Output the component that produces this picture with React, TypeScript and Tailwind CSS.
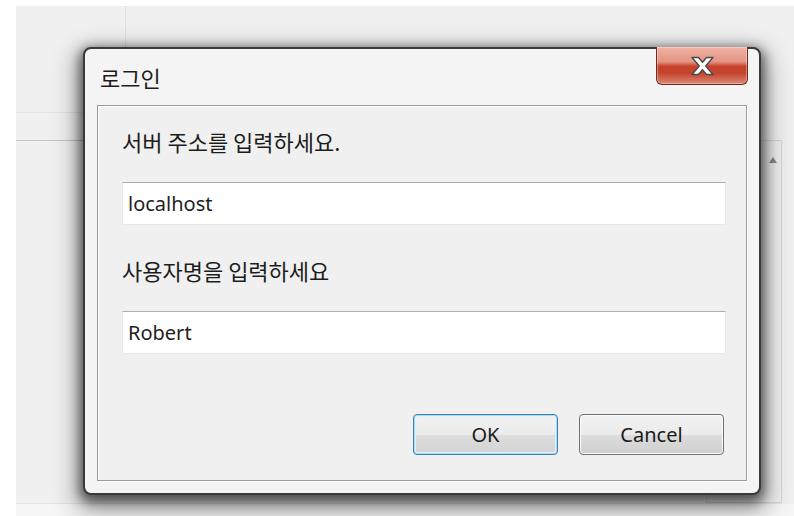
const korean = { fontFamily: '"Noto Sans CJK KR", "Noto Sans", sans-serif' };
const latin = { fontFamily: '"Noto Sans", "Noto Sans CJK KR", sans-serif' };

/** 빨간 닫기 버튼의 X 글리프 */
function CloseGlyph() {
  return (
    <svg width="25" height="20" viewBox="0 0 25 20">
      <path
        d="M2 1.5h6.5l4 4.8 4-4.8H23l-7.3 8.5L23 18.5h-6.5l-4-4.8-4 4.8H2l7.3-8.5z"
        fill="#ffffff"
        stroke="#4a4a4a"
        strokeWidth="1.4"
        strokeLinejoin="round"
      />
    </svg>
  );
}

function Field({ value }: { value: string }) {
  return (
    <div
      className="flex h-[43px] items-center border border-[#e3e9ef] border-t-[#abadb3] bg-white px-[5px] text-[20px] text-[#1e1e1e]"
      style={latin}
    >
      {value}
    </div>
  );
}

function DialogButton({ label, primary }: { label: string; primary?: boolean }) {
  return (
    <button
      className={
        primary
          ? 'flex h-[41px] w-[145px] items-center justify-center rounded-[4px] border border-[#3c7fb1] bg-[linear-gradient(#f2f2f2_0%,#ebebeb_50%,#dddddd_51%,#d3d3d3_100%)] text-[20px] text-[#1a1a1a] shadow-[inset_0_0_0_1px_#a8dcf6,inset_0_0_0_2px_#e2f3fc]'
          : 'flex h-[41px] w-[145px] items-center justify-center rounded-[4px] border border-[#707070] bg-[linear-gradient(#f2f2f2_0%,#ebebeb_50%,#dddddd_51%,#cfcfcf_100%)] text-[20px] text-[#1a1a1a] shadow-[inset_0_0_0_1px_#fcfcfc]'
      }
      style={latin}
    >
      {label}
    </button>
  );
}

export default function App() {
  return (
    <div className="relative h-[516px] w-[794px] overflow-hidden bg-white">
      {/* 뒤쪽 창 */}
      <div className="absolute left-[16px] top-[6px] right-0 bottom-0 bg-[#f0f0f0]">
        <div className="absolute left-[109px] top-0 h-[42px] w-px bg-[#d6e0e8]" />
        <div className="absolute left-0 top-[106px] h-px w-[80px] bg-[#dfe6ec]" />
        <div className="absolute left-0 top-[134px] h-px w-[80px] bg-[#c4c4c4]" />
        <div className="absolute left-[690px] top-[134px] h-[363px] w-[76px] border border-[#d8d8d8] bg-[#f0f0f0]">
          <div className="absolute left-[62px] top-[16px] h-0 w-0 border-x-[4px] border-b-[6px] border-x-transparent border-b-[#8a8a8a]" />
        </div>
        <div className="absolute left-0 right-[12px] top-[497px] h-px bg-[#dfe6ec]" />
        <div className="absolute left-0 right-0 top-[498px] bottom-0 bg-[#f6f6f6]" />
      </div>

      {/* 로그인 대화상자 */}
      <div
        className="absolute left-[83px] top-[47px] flex h-[448px] w-[678px] flex-col rounded-[8px] border-[2px] border-[#3a3a3a] bg-[#f4f4f4] shadow-[0_4px_12px_3px_rgba(0,0,0,0.55),0_10px_24px_8px_rgba(0,0,0,0.3)]"
        style={korean}
      >
        <div className="flex h-[56px] items-start justify-between pl-[15px] pr-[11px]">
          <span className="mt-[14px] text-[22px] leading-[28px] text-[#1c1c1c]">로그인</span>
          <button className="-mt-[2px] flex h-[38px] w-[92px] items-center justify-center rounded-b-[6px] border border-t-0 border-[#6e2a1e] bg-[linear-gradient(#f0b2a4_0%,#e39583_40%,#c8412a_52%,#c4442d_70%,#dc8874_100%)] shadow-[inset_0_0_0_1px_rgba(255,255,255,0.35)]">
            <CloseGlyph />
          </button>
        </div>

        <div className="mx-[12px] mb-[12px] flex flex-1 flex-col border border-[#9a9a9a] bg-[#f0f0f0] pl-[24px] pr-[20px] pt-[20px] shadow-[inset_1px_1px_0_#ffffff,1px_1px_0_#ffffff]">
          <div className="text-[22px] leading-[30px] text-[#1c1c1c]">서버 주소를 입력하세요.</div>
          <div className="mt-[26px]">
            <Field value="localhost" />
          </div>
          <div className="mt-[30px] text-[22px] leading-[30px] text-[#1c1c1c]">사용자명을 입력하세요</div>
          <div className="mt-[26px]">
            <Field value="Robert" />
          </div>
          <div className="mt-[60px] flex justify-end gap-[21px] pr-[2px]">
            <DialogButton label="OK" primary />
            <DialogButton label="Cancel" />
          </div>
        </div>
      </div>
    </div>
  );
}
